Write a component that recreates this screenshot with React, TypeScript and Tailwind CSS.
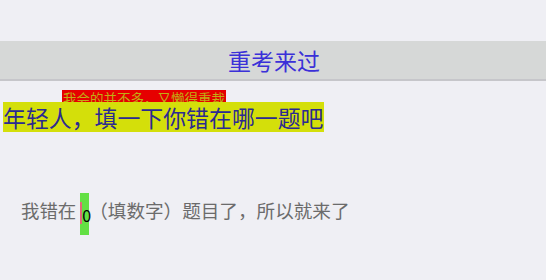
import React from 'react';

const cjk = { fontFamily: '"Noto Sans CJK SC", "Noto Sans", sans-serif' };

const App: React.FC = () => {
  return (
    <div className="w-[546px] h-[280px] bg-[#efeff4] overflow-hidden" style={cjk}>
      <div className="h-[41px]" />
      <div className="h-[40px] bg-[#d6d8d7] border-b-2 border-[#c6c6ca] flex items-center justify-center">
        <span className="text-[23px] leading-none text-[#3b30d8] ml-[2px]">重考来过</span>
      </div>
      <div className="relative h-[52px]">
        <div className="absolute left-[62px] top-[9px] w-[164px] h-[12px] bg-[#e60000] overflow-hidden">
          <span className="block text-[13.5px] leading-[16px] text-[#c2ad14] whitespace-nowrap pl-[1px]">我会的并不多，又懒得重裁</span>
        </div>
        <div className="absolute left-[3px] top-[21px] w-[321px] h-[30px] bg-[#d4df0a] flex items-center">
          <span className="text-[22.9px] leading-none text-[#2b2a92] whitespace-nowrap">年轻人，填一下你错在哪一题吧</span>
        </div>
      </div>
      <div className="h-[60px]" />
      <div className="flex items-start pl-[21px] leading-[18px] text-[#6b6b6b]">
        <span className="mt-[8px] text-[18.4px]">我错在</span>
        <div className="relative w-[9px] h-[42px] bg-[#63e044] ml-[4px]">
          <div className="absolute left-0 top-[9px] w-[2px] h-[22px] bg-[#e2687a]" />
          <span className="absolute left-[2px] top-[14px] text-[16px] leading-[16px] text-black">0</span>
        </div>
        <span className="mt-[8px] text-[18.6px] whitespace-nowrap">（填数字）题目了，所以就来了</span>
      </div>
    </div>
  );
};

export default App;
